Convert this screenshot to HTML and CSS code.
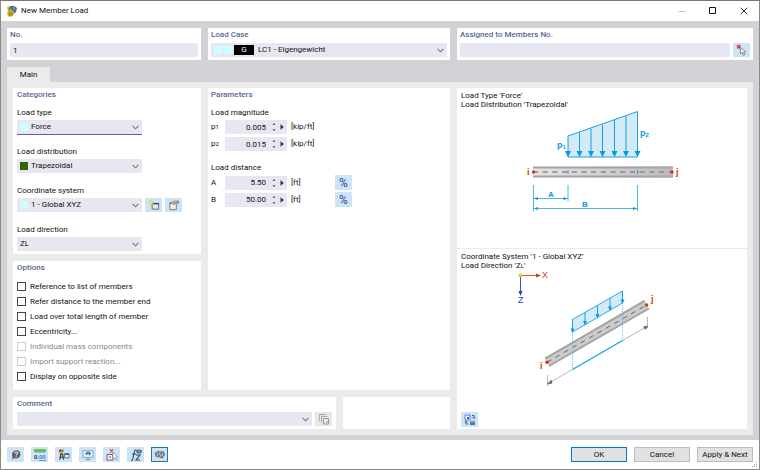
FILE: index.html
```html
<!DOCTYPE html>
<html lang="en">
<head>
<meta charset="utf-8">
<title>New Member Load</title>
<link rel="stylesheet" href="styles.css">
</head>
<body>
<svg class="defs" aria-hidden="true">
  <symbol id="chevron" viewBox="0 0 7 5"><path d="M.6 .8 3.5 3.8 6.4 .8" fill="none" stroke="#77777d" stroke-width="1.1"/></symbol>
  <symbol id="spin" viewBox="0 0 12 10"><path d="M.5 2.800 2 1 3.500 2.800zM.5 7.200 2 9 3.500 7.200z" fill="#444"/><path d="M8.500 2.200V7.800L11.800 5z" fill="#333"/></symbol>
</svg>
<main class="window">
  <header class="titlebar">
    <svg class="app-icon" viewBox="0 0 12 12" aria-hidden="true">
      <path d="M2 4Q4 0 8 1L11 3 10 7 7 9 5 4z" fill="#476486"/><path d="M6 2 10 5M8 1 7 7" stroke="#8fa7bd" stroke-width=".7"/>
      <path d="M1 2 3 1 5 5 8 7 7 11 3 12 1 9 2 6z" fill="#d9b51d"/><path d="M3 3 4 6M3 8h3v2H3z" stroke="#705d18" stroke-width=".8" fill="#f3dc63"/>
    </svg>
    <h1>New Member Load</h1>
    <div class="window-controls">
      <button type="button" aria-label="Minimize" disabled><svg viewBox="0 0 8 8"><path d="M.5 4.500h7" stroke="#c8c8c8"/></svg></button>
      <button type="button" aria-label="Maximize"><svg viewBox="0 0 8 8"><path d="M.5 .5h6v6h-6z" fill="none" stroke="#111"/></svg></button>
      <button type="button" aria-label="Close"><svg viewBox="0 0 8 8"><path d="M.7 .7 7.300 7.300M7.300 .7 .7 7.300" stroke="#111" stroke-width=".9"/></svg></button>
    </div>
  </header>

  <div class="workspace">
    <div class="summary">
      <section class="panel">
        <label class="heading" for="no">No.</label>
        <input class="field" id="no" value="1">
      </section>
      <section class="panel">
        <label class="heading" for="loadcase">Load Case</label>
        <div class="select case">
          <select class="field" id="loadcase"><option>LC1 - Eigengewicht</option></select>
          <span class="case-tags"><i class="swatch cyan"></i><i class="swatch cyan"></i><b>G</b></span>
          <svg class="chevron"><use href="#chevron"/></svg>
        </div>
      </section>
      <section class="panel">
        <label class="heading" for="members">Assigned to Members No.</label>
        <div class="row">
          <input class="field" id="members">
          <button type="button" class="tool" aria-label="Select members"><svg viewBox="0 0 11 11"><path d="M1 1 4 4M4 1 1 4" stroke="#d93a4a" stroke-width="1.400"/><path d="M4 3v6l1.500-1.300L6.800 10.500 8 10 6.900 7.300H9z" fill="#fff" stroke="#77777d" stroke-width=".8"/></svg></button>
        </div>
      </section>
    </div>

    <nav class="tabs"><button type="button" class="tab">Main</button></nav>
    <div class="page">
      <section class="panel categories">
        <h2 class="heading">Categories</h2>
        <label for="type">Load type</label>
        <div class="select tagged focus"><select class="field" id="type"><option>Force</option></select><i class="swatch cyan"></i><svg class="chevron"><use href="#chevron"/></svg></div>
        <label for="dist">Load distribution</label>
        <div class="select tagged"><select class="field" id="dist"><option>Trapezoidal</option></select><i class="swatch green"></i><svg class="chevron"><use href="#chevron"/></svg></div>
        <label for="cs">Coordinate system</label>
        <div class="row">
          <div class="select tagged"><select class="field" id="cs"><option>1 - Global XYZ</option></select><i class="swatch cyan"></i><svg class="chevron"><use href="#chevron"/></svg></div>
          <button type="button" class="tool" aria-label="New coordinate system"><svg viewBox="0 0 13 12"><path d="M4.500 4.500h7v6h-7z" fill="#e9e9e2" stroke="#666670"/><path d="M6 4.500h6" stroke="#3d4d9c" stroke-width="1.600"/><path d="M3.500 .5v6M.5 3.500h6M1.300 1.300l4.400 4.400M5.700 1.300 1.300 5.700" stroke="#bcb92d" stroke-width=".7"/><circle cx="3.500" cy="3.500" r="1.600" fill="#f6ef35"/></svg></button>
          <button type="button" class="tool" aria-label="Edit coordinate system"><svg viewBox="0 0 13 12"><path d="M2 4h7v7H2z" fill="#efeeea" stroke="#77777a"/><path d="M2 4h7" stroke="#666" stroke-width="1.400"/><path d="M3 4 6 1 10 1.500 9 5 6 6z" fill="#bf9c83"/><path d="M9.500 1 12 1.500V4.500L9 4z" fill="#6f8fbd"/></svg></button>
        </div>
        <label for="dir">Load direction</label>
        <div class="select"><select class="field" id="dir"><option>Zʟ</option></select><svg class="chevron"><use href="#chevron"/></svg></div>
      </section>

      <section class="panel options">
        <h2 class="heading">Options</h2>
        <label class="check"><input type="checkbox">Reference to list of members</label>
        <label class="check"><input type="checkbox">Refer distance to the member end</label>
        <label class="check"><input type="checkbox">Load over total length of member</label>
        <label class="check"><input type="checkbox">Eccentricity...</label>
        <label class="check"><input type="checkbox" disabled>Individual mass components</label>
        <label class="check"><input type="checkbox" disabled>Import support reaction...</label>
        <label class="check"><input type="checkbox">Display on opposite side</label>
      </section>

      <section class="panel parameters">
        <h2 class="heading">Parameters</h2>
        <h3>Load magnitude</h3>
        <div class="param"><label for="p1">p<small>1</small></label><div class="number"><input class="field" id="p1" value="0.005"><svg><use href="#spin"/></svg></div><span>[kip/ft]</span></div>
        <div class="param"><label for="p2">p<small>2</small></label><div class="number"><input class="field" id="p2" value="0.015"><svg><use href="#spin"/></svg></div><span>[kip/ft]</span></div>
        <h3 class="next">Load distance</h3>
        <div class="param"><label for="a">A</label><div class="number"><input class="field" id="a" value="5.50"><svg><use href="#spin"/></svg></div><span>[ft]</span><button type="button" class="tool percent">%</button></div>
        <div class="param"><label for="b">B</label><div class="number"><input class="field" id="b" value="50.00"><svg><use href="#spin"/></svg></div><span>[ft]</span><button type="button" class="tool percent">%</button></div>
      </section>

      <section class="panel preview">
        <div class="figure">
          <p>Load Type 'Force'</p>
          <p>Load Distribution 'Trapezoidal'</p>
          <svg class="drawing" width="170" height="110" viewBox="521 109 170 110">
            <defs><linearGradient id="beam"><stop stop-color="#e4e4e4"/><stop offset="1" stop-color="#bcbcbc"/></linearGradient></defs>
            <path d="M568 136 637.500 111.500V157H568z" fill="#d3ebf8" stroke="#1b9fe0"/>
            <path d="M579.500 132.500V152M591 128.500V152M602.500 124.500V152M614.500 120V152M626 116V152" stroke="#1b9fe0"/>
            <path d="M565 151h6l-3 6zM576.500 151h6l-3 6zM588 151h6l-3 6zM599.500 151h6l-3 6zM611.500 151h6l-3 6zM623 151h6l-3 6zM634.500 151h6l-3 6z" fill="#0a99de"/>
            <path d="M533 166.500h140v11H533z" fill="url(#beam)"/>
            <path d="M533 167.500h140M533 176.500h140" stroke="#a5a5aa" stroke-width="2"/>
            <path d="M533 172h139" stroke="#85858d" stroke-width="1.300" stroke-dasharray="5 4.700"/>
            <path d="M568 170v4M637.500 170v4" stroke="#1b9fe0"/>
            <circle cx="533.500" cy="172" r="1.700" fill="#d13a10"/><circle cx="672" cy="172" r="1.700" fill="#d13a10"/>
            <path d="M533.500 185v26M568 185v16M637.500 185v26M533.500 198.500H568M533.500 208.500h104" stroke="#3faee4" stroke-width=".9" fill="none"/>
            <path d="M534 198.500l4-1.500v3zM567.500 198.500l-4-1.500v3zM534 208.500l4-1.500v3zM637 208.500l-4-1.500v3z" fill="#0a99de"/>
            <g class="blue"><text x="557" y="148">p<tspan class="index" dy="1">1</tspan></text><text x="640" y="136">p<tspan class="index" dy="1">2</tspan></text><text class="dimension" x="548" y="197">A</text><text class="dimension" x="582" y="207">B</text></g>
            <g class="red"><text x="527" y="175">i</text><text x="676" y="175">j</text></g>
          </svg>
        </div>
        <div class="figure lower">
          <p>Coordinate System '1 - Global XYZ'</p>
          <p>Load Direction 'Z<small>L</small>'</p>
          <svg class="drawing axes" width="150" height="120" viewBox="515 270 150 120">
            <path d="M520.500 275.500H538" stroke="#d9552d"/><path d="M536 273.500l5 2-5 2z" fill="#d13a10"/>
            <path d="M520.500 275.500V293" stroke="#3656c8"/><path d="M518.500 291h4l-2 5z" fill="#203fb6"/>
            <circle cx="520.500" cy="275.500" r="1.600" fill="#f4e400" stroke="#9a9a20" stroke-width=".5"/>
            <path d="M545 358 644 299.800 649 309 549.500 366.500z" fill="#cbcbcb"/>
            <path d="M545 358.700 644.500 301M549 366 649 308.500" stroke="#a5a5a9" stroke-width="2"/>
            <path d="M547 362.300 646.500 305" stroke="#66666e" stroke-dasharray="5 4.700"/>
            <path d="M572.500 319.500 622.500 291V303L572.500 332z" fill="#d3ebf8" stroke="#1b9fe0" stroke-width=".9"/>
            <path d="M572.500 319v10M585 312.500v9M597.500 305v9M610 298v9M622.500 291v9" stroke="#1b9fe0"/>
            <path d="M570.500 328.500h4l-2 4.500zM583 321h4l-2 4.500zM595.500 314h4l-2 4.500zM608 306.500h4l-2 4.500zM620.500 299.500h4l-2 4.500z" fill="#0a99de"/>
            <path d="M572.500 333v36M622.500 303v37" stroke="#64b9e4" stroke-width=".9" stroke-dasharray="1 1"/>
            <path d="M548 383.500 572.500 369.500M622.500 340.500 647 326.500M547.500 375v11M647.500 317v11" stroke="#a4a4ab" stroke-width=".8"/>
            <path d="M572.500 369.500 622.500 340.500" stroke="#1b9fe0" stroke-width="1.400"/>
            <path d="M547.500 384l4-4 .4 3.300zM647.500 326l-4 .8 2.200 2.700z" fill="#62626c" stroke="#62626c" stroke-width=".6"/>
            <circle cx="547" cy="362.300" r="1.800" fill="#d13a10"/><circle cx="646.500" cy="305" r="1.800" fill="#d13a10"/>
            <g class="red"><text x="540" y="369">i</text><text x="651" y="302">j</text></g>
            <text class="axis-x" x="542" y="278">X</text><text class="axis-z" x="518" y="303">Z</text>
          </svg>
          <button type="button" class="tool" aria-label="Change picture"><svg viewBox="0 0 12 12"><path d="M1 1h5v5H1z" fill="#fff" stroke="#4f7de8"/><path d="M3 3h2v2H3z" fill="#315bc5"/><path d="M8 1.500h2V4M8.500 3 10 4.500 11.300 3M2 7v3h2M1 8.500 2 7 3.300 8.500" fill="none" stroke="#555" stroke-width=".9"/><path d="M6 7.500h5v3.500H6z" fill="#5d7794"/><ellipse cx="8.500" cy="7.500" rx="2.500" ry="1" fill="#89a5c5"/></svg></button>
        </div>
      </section>

      <section class="panel comment">
        <label class="heading" for="comment">Comment</label>
        <div class="row">
          <div class="select"><select class="field" id="comment"><option></option></select><svg class="chevron"><use href="#chevron"/></svg></div>
          <button type="button" class="tool muted" aria-label="Comment library" disabled><svg viewBox="0 0 12 12"><path d="M1.500 8V1.500H8M3.500 9.500v-6H9.500" fill="none" stroke="#aaa"/><path d="M5.500 5.500h5v5.500h-5z" fill="#eee" stroke="#999"/><path d="M8 9h2" stroke="#888"/></svg></button>
        </div>
      </section>
      <section class="panel blank"></section>
    </div>
  </div>

  <footer class="footer">
    <div class="tools">
      <button type="button" class="tool" aria-label="Help"><svg viewBox="0 0 12 12"><path d="M2 11 2.500 8Q1 4 4 2 8 0 10 3 11.500 7 8 9 5 10 4 9z" fill="#5c6065"/><path d="M4.500 4Q6.500 2 8 3.800 8 5 6.300 5.500V6.500M6.200 7.300v1" fill="none" stroke="#dbe8f2" stroke-width="1.100"/></svg></button>
      <button type="button" class="tool" aria-label="Units"><svg viewBox="0 0 12 12"><path d="M0 0h12v3H0z" fill="#72c05b"/><path d="M2 2v2M4 3v1M6 2v2M8 3v1M10 2v2" stroke="#4b9640" stroke-width=".6"/><text x="0" y="10" class="unit">0.<tspan class="unit-blue">00</tspan></text><path d="M5 11.500h7" stroke="#3b7de0" stroke-width=".8"/></svg></button>
      <button type="button" class="tool" aria-label="Display properties"><svg viewBox="0 0 13 12"><path d="M1 0h3v3H1z" fill="#df3035"/><path d="M4 0h2v3H4z" fill="#24a43a"/><path d="M1 3h4v2H1z" fill="#e3c82e"/><path d="M2 11 3 5H5L6 11M2 8.500h4" fill="none" stroke="#333" stroke-width="1.200"/><path d="M7 5h5v4H7z" fill="#f8f8f8" stroke="#55617b"/><path d="M7 5h5" stroke="#354c9b" stroke-width="1.500"/></svg></button>
      <button type="button" class="tool" aria-label="View"><svg viewBox="0 0 13 12"><path d="M1 1.500h11v7H1z" fill="#eef7ff" stroke="#829bac"/><path d="M3 5Q6 0 10 4L8 7 7 5 5 6z" fill="#4784b1"/><path d="M6.500 9v2M4 11h5" stroke="#768b99"/></svg></button>
      <button type="button" class="tool" aria-label="Pick object"><svg viewBox="0 0 12 12"><path d="M1 5.500h6V11H1z" fill="#f5f5f5" stroke="#666"/><path d="M3 8h2" stroke="#555"/><path d="M4 .5 7 3.500M7 .5 4 3.500" stroke="#df3440" stroke-width="1.300"/><path d="M7 3v7l1.500-1.500L10 11l1-.5L10 8h1.500z" fill="#fff" stroke="#8a8585" stroke-width=".7"/></svg></button>
      <button type="button" class="tool" aria-label="Formulas"><svg viewBox="0 0 12 12"><path d="M1 11.500Q2.500 12 3 9L4.500 2.500Q5 .5 6.500 1M2 5h4M6 6h4L6 11h4" fill="none" stroke="#344258" stroke-width="1.100"/><ellipse cx="9" cy="2.500" rx="2.800" ry="2" fill="#4a5f90"/><path d="M8 2.500h2M9 1.500v2" stroke="#b5c6df" stroke-width=".6"/></svg></button>
      <button type="button" class="tool active" aria-label="Script"><svg viewBox="0 0 12 12"><path d="M1 6Q0 3 3 2.500 5 1 6.500 2.500 10 1 10.500 4 12 6 10 7 10 10 7.500 9 6 10 5 8 1 9 1 6z" fill="#777b7e"/><path d="M3 4 4 6 2.500 7M6 3 5 5 7 6 6 8M9 4 8 6 9.500 7.500" fill="none" stroke="#d7e0e6" stroke-width=".7"/></svg></button>
    </div>
    <div class="actions">
      <button type="button" class="primary">OK</button>
      <button type="button">Cancel</button>
      <button type="button">Apply &amp; Next</button>
    </div>
    <svg class="grip" viewBox="0 0 6 6" aria-hidden="true"><path d="M4 0h1v1H4zM2 2h1v1H2zM4 2h1v1H4zM0 4h1v1H0zM2 4h1v1H2zM4 4h1v1H4z" fill="#aaa"/></svg>
  </footer>
</main>
</body>
</html>
```
FILE: styles.css
```css
* { box-sizing: border-box; }
body, h1, h2, h3, p { margin: 0; }
body { background: #fff; color: #111; font: 8px/12px Roboto, "Noto Sans", sans-serif; }
button, input, select { font: inherit; color: inherit; margin: 0; padding: 0; border: 0; border-radius: 0; }
svg { display: block; }
.defs { position: absolute; width: 0; height: 0; }

.window { min-height: 100vh; display: flex; flex-direction: column; border: 1px solid #8a8a8c; border-top-color: #777; background: #fff; }
.titlebar { height: 20px; display: flex; align-items: center; padding-left: 5px; }
.app-icon { width: 12px; height: 12px; }
h1 { flex: 1; margin-left: 3px; font-size: 8px; font-weight: 400; }
.window-controls { display: flex; }
.window-controls button { width: 31px; height: 18px; display: grid; place-items: center; background: none; }
.window-controls svg { width: 8px; height: 8px; }

.workspace { flex: 1; display: flex; flex-direction: column; padding: 7px 6px 5px; background: #d2d1d6; }
.summary { display: grid; grid-template-columns: 194fr 242fr 296fr; gap: 7px; }
.panel { min-width: 0; padding: 0 3px; background: #fff; }
.summary .panel { height: 32px; }
.heading { display: block; height: 14px; line-height: 14px; margin-bottom: 1px; font-size: 8px; font-weight: 500; color: #586791; }
.row { display: flex; gap: 3px; }
.field { display: block; width: 100%; height: 14px; padding: 0 3px; background: #e7e7f2; outline: 0; appearance: none; }
.row > .field { flex: 1; width: auto; min-width: 0; }

.select { position: relative; }
.chevron { position: absolute; right: 3px; top: 5px; width: 7px; height: 5px; }
.swatch { width: 8px; height: 8px; }
.cyan { background: #ccffff; }
.green { background: #336600; }
.tagged .swatch { position: absolute; left: 3px; top: 3px; }
.tagged .field { padding-left: 14px; }
.focus .field { border-bottom: 1px solid #5f5fae; height: 15px; }
.case .field { padding-left: 47px; }
.case-tags { position: absolute; left: 3px; top: 2px; display: flex; align-items: center; gap: 2px; }
.case-tags b { width: 20px; height: 10px; background: #000; color: #fff; font-weight: 400; line-height: 10px; text-align: center; }

.tool { flex: none; width: 17px; height: 15px; display: grid; place-items: center; background: #cce4f7; }
.tool svg { width: 12px; height: 12px; }
.muted { background: #e6e6e6; }
.row .tool { height: 14px; }

.tabs { margin-top: 7px; }
.tab { display: block; width: 43px; height: 15px; background: #ebebeb; }
.page { flex: 1; display: grid; grid-template-columns: 188fr 128fr 107fr 290fr; grid-template-rows: 166px 1fr 32px; gap: 7px; padding: 6px; background: #ebebeb; }
.categories { grid-column: 1; grid-row: 1; padding: 0 4px; }
.options { grid-column: 1; grid-row: 2; padding: 0 4px; }
.parameters { grid-column: 2 / 4; grid-row: 1 / 3; }
.preview { grid-column: 4; grid-row: 1 / 4; }
.comment { grid-column: 1 / 3; grid-row: 3; padding: 0 4px; }
.comment .select { flex: 1; }
.blank { grid-column: 3; grid-row: 3; }

.categories .heading, .parameters .heading, .options .heading { margin-bottom: 4px; }
.categories > label { display: block; line-height: 14px; }
.categories .select { width: 125px; }
.categories > .select, .categories > .row { margin-bottom: 11px; }
.categories > .focus { margin-bottom: 10px; }

.check { height: 15px; display: flex; align-items: center; gap: 4px; }
.check input { width: 9px; height: 9px; appearance: none; border: 1px solid #444; background: #fff; }
.check input:disabled { border-color: #ccc; }
.check:has(:disabled) { color: #888; }

h3 { height: 14px; line-height: 14px; font-size: 8px; font-weight: 400; }
.next { margin-top: 10px; }
.param { display: grid; grid-template-columns: 10px 62px 40px 17px; column-gap: 4px; align-items: center; height: 14px; margin-bottom: 3px; }
small { font-size: 6px; }
.number { position: relative; }
.number .field { padding-right: 21px; text-align: right; }
.number svg { position: absolute; right: 3px; top: 2px; width: 12px; height: 10px; }
.percent { color: #55559d; font-size: 12px; font-weight: 500; }

.preview { display: flex; flex-direction: column; padding: 0; }
.figure { height: 160px; padding: 3px 4px 2px; line-height: 9px; }
.lower { flex: 1; display: flex; flex-direction: column; border-top: 1px solid #ebebeb; }
.lower .tool { margin-top: auto; }
.figure p { height: 9px; }
.drawing { margin-left: 60px; font: bold 9px "Liberation Sans", sans-serif; }
.axes { margin-left: 54px; }
.blue { fill: #0a99de; }
.red { fill: #d13a10; }
.index { font-size: 6px; }
.dimension { font-size: 8px; }
.axis-x { fill: #d13a10; font-weight: 400; }
.axis-z { fill: #203fb6; font-weight: 400; }
.unit { font: bold 6px "Liberation Sans", sans-serif; fill: #333; }
.unit-blue { fill: #3b7de0; }

.footer { position: relative; height: 29px; display: flex; align-items: center; justify-content: space-between; padding: 0 6px; background: #fff; }
.tools, .actions { display: flex; gap: 7px; }
.active { border: 1px solid #2874b0; }
.actions button { width: 56px; height: 15px; border: 1px solid #bdbdbd; background: #e1e1e1; }
.actions .primary { border-color: #0078d7; }
.grip { position: absolute; right: 1px; bottom: 1px; width: 6px; height: 6px; }
```
